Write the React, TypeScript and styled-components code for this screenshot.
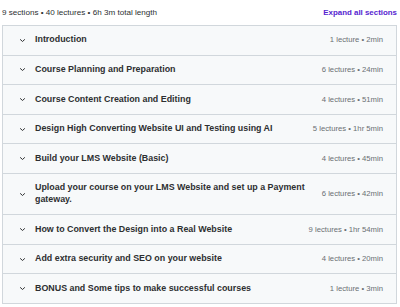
import styled, { createGlobalStyle } from "styled-components";

const GlobalStyle = createGlobalStyle`
  html, body {
    margin: 0;
    padding: 0;
    background: #ffffff;
  }
  body {
    font-family: "Liberation Sans", Arial, sans-serif;
    color: #2d2f31;
  }
`;

interface ISection {
  title: string;
  lectures: number;
  length: string;
}

const sections: ISection[] = [
  { title: "Introduction", lectures: 1, length: "2min" },
  { title: "Course Planning and Preparation", lectures: 6, length: "24min" },
  { title: "Course Content Creation and Editing", lectures: 4, length: "51min" },
  { title: "Design High Converting Website UI and Testing using AI", lectures: 5, length: "1hr 5min" },
  { title: "Build your LMS Website (Basic)", lectures: 4, length: "45min" },
  { title: "Upload your course on your LMS Website and set up a Payment gateway.", lectures: 6, length: "42min" },
  { title: "How to Convert the Design into a Real Website", lectures: 9, length: "1hr 54min" },
  { title: "Add extra security and SEO on your website", lectures: 4, length: "20min" },
  { title: "BONUS and Some tips to make successful courses", lectures: 1, length: "3min" },
];

const Chevron = () => (
  <ChevronIcon viewBox="0 0 10 10" aria-hidden>
    <path d="M2.7 4 L5 6.1 L7.3 4" fill="none" stroke="#2d2f31" strokeWidth="1.1" strokeLinecap="round" strokeLinejoin="round" />
  </ChevronIcon>
);

export default function App() {
  return (
    <>
      <GlobalStyle />
      <Page>
        <Summary>
          <SummaryText>9 sections • 40 lectures • 6h 3m total length</SummaryText>
          <ExpandButton>Expand all sections</ExpandButton>
        </Summary>
        <Curriculum>
          {sections.map((section) => (
            <SectionRow key={section.title}>
              <Chevron />
              <SectionTitle>{section.title}</SectionTitle>
              <SectionMeta>
                {section.lectures} {section.lectures === 1 ? "lecture" : "lectures"} • {section.length}
              </SectionMeta>
            </SectionRow>
          ))}
        </Curriculum>
      </Page>
    </>
  );
}

const Page = styled.div`
  width: 400px;
  padding: 0 3px 0 2px;
  box-sizing: border-box;
`;

const Summary = styled.div`
  display: flex;
  align-items: center;
  justify-content: space-between;
  height: 25px;
  padding-bottom: 1px;
  box-sizing: border-box;
`;

const SummaryText = styled.span`
  font-size: 8.1px;
  color: #2d2f31;
`;

const ExpandButton = styled.button`
  border: none;
  background: none;
  padding: 0;
  font-family: inherit;
  font-size: 7.9px;
  font-weight: 700;
  color: #5624d0;
  cursor: pointer;
`;

const Curriculum = styled.div`
  border: 1px solid #d1d7dc;
  border-bottom: none;
`;

const SectionRow = styled.div`
  display: flex;
  align-items: center;
  padding: 8.4px 13px 8.4px 15px;
  background: #f7f9fa;
  border-bottom: 1px solid #d1d7dc;
`;

const ChevronIcon = styled.svg`
  width: 9px;
  height: 9px;
  flex-shrink: 0;
  margin-right: 8px;
`;

const SectionTitle = styled.div`
  flex: 1;
  font-size: 8.9px;
  line-height: 11.8px;
  font-weight: 700;
  color: #2d2f31;
`;

const SectionMeta = styled.div`
  margin-left: 16px;
  font-size: 7.7px;
  line-height: 11.8px;
  color: #6a6f73;
  white-space: nowrap;
`;
